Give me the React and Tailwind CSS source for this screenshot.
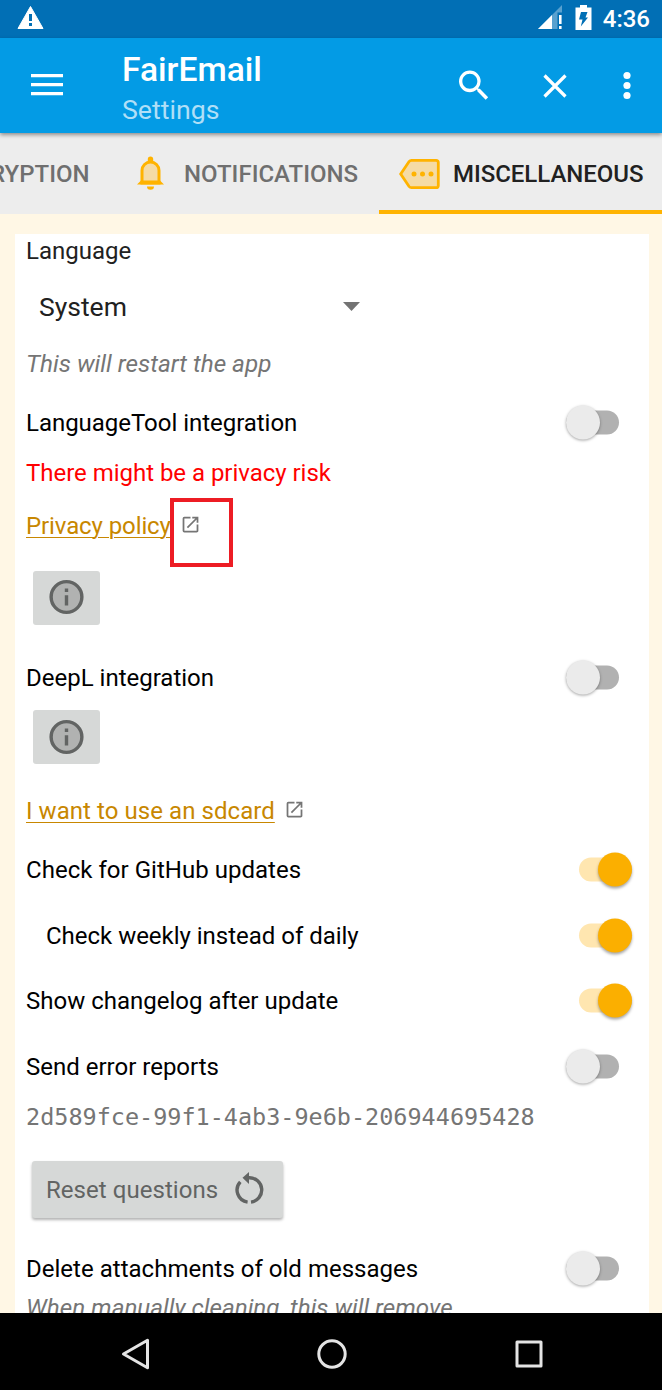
import React from "react";

function Switch({ on }) {
  return on ? (
    <span className="relative mr-[17px] block h-6 w-[53px] shrink-0 -translate-y-[0.5px] rounded-full bg-[#ffe6b0]">
      <span className="absolute -top-[5px] right-0 size-[34px] rounded-full bg-[#fbaf00] shadow-[0_2px_3px_rgba(0,0,0,0.35)]" />
    </span>
  ) : (
    <span className="relative mr-[30px] block h-6 w-[53px] shrink-0 -translate-y-[0.5px] rounded-full bg-[#b1b1b1]">
      <span className="absolute -top-[5px] -left-[0.5px] size-[34px] rounded-full bg-[#ebebeb] shadow-[0_1px_3px_rgba(0,0,0,0.35)]" />
    </span>
  );
}

function SwitchRow({ label, on = false, className = "" }) {
  return (
    <div className={`flex items-center justify-between text-black ${className}`}>
      <span>{label}</span>
      <Switch on={on} />
    </div>
  );
}

function OpenIcon() {
  return (
    <svg className="mb-[3px] ml-[9.500px] size-[21px]" viewBox="0 0 24 24" fill="#757575">
      <path d="M19 19H5V5h7V3H5a2 2 0 0 0-2 2v14a2 2 0 0 0 2 2h14c1.1 0 2-.9 2-2v-7h-2v7zM14 3v2h3.59l-9.83 9.83 1.41 1.41L19 6.41V10h2V3h-7z" />
    </svg>
  );
}

function InfoButton({ className }) {
  return (
    <button className={`ml-[17.500px] flex h-[54px] w-[67.500px] items-center justify-center rounded-[3px] bg-[#d6d8d7] ${className}`}>
      <svg className="size-[41px] -translate-y-[0.5px]" viewBox="0 0 24 24">
        <circle cx="12" cy="12" r="9" fill="#b1b2b1" stroke="#626463" strokeWidth="2" />
        <path d="M11 7h2v2h-2zM11 11h2v6h-2z" fill="#626463" />
      </svg>
    </button>
  );
}

function StatusBar() {
  return (
    <div className="flex h-[38px] shrink-0 items-center bg-[#016fb5] pr-3 pl-[17px] text-white">
      <svg className="size-[27px] -translate-y-[2px]" viewBox="0 0 27 27">
        <path d="M13.5 2.5 26 24.5H1z" fill="#fff" stroke="#fff" strokeLinejoin="round" />
        <path d="M12 10h3v7h-3zM12 19h3v3h-3z" fill="#016fb5" />
      </svg>
      <svg className="ml-auto h-6 w-6 -translate-y-[2px]" viewBox="0 0 24 24">
        <path d="M24 0v7.500h-4.500V24H0z" fill="#fff" opacity=".35" />
        <path d="M14 10v14H0z" fill="#fff" />
        <path d="M21 10h2.600v9H21zM21 21h2.600v3H21z" fill="#fff" />
      </svg>
      <svg className="ml-[13px] h-[25px] w-[17px] -translate-y-[2px]" viewBox="0 0 17 25">
        <path d="M5 0h7v2.500h4.500V25H.5V2.500H5z" fill="#fff" />
        <path d="M6 7h6.500l-2 5.500H13L5.800 21.500l1.700-7H4z" fill="#016fb5" />
      </svg>
      <span className="ml-[11px] text-[24px] leading-none font-medium">4:36</span>
    </div>
  );
}

function Toolbar() {
  return (
    <header className="relative z-10 flex h-[95px] shrink-0 items-center bg-[#039be5] pr-[31.500px] pl-[31px] text-white shadow-[0_2px_4px_rgba(0,0,0,0.4)]">
      <svg className="h-[22px] w-8 -translate-y-px" viewBox="0 0 32 22" fill="#fff">
        <path d="M0 0h32v3.200H0zM0 9h32v3.200H0zM0 18h32v3.200H0z" />
      </svg>
      <div className="ml-[59px] flex flex-col pt-2">
        <span className="text-[33.600px] leading-[40px] font-medium">FairEmail</span>
        <span className="text-[26.700px] leading-[40px] text-[#b0dff7]">Settings</span>
      </div>
      <svg className="ml-auto size-[40px] -translate-y-[0.5px]" viewBox="0 0 24 24" fill="#fff">
        <path d="M15.500 14h-.79l-.28-.27A6.471 6.471 0 0 0 16 9.500 6.500 6.500 0 1 0 9.500 16c1.610 0 3.090-.59 4.230-1.570l.27.28v.79l5 4.990L20.490 19l-4.990-5zm-6 0C7.010 14 5 11.990 5 9.500S7.010 5 9.500 5 14 7.010 14 9.500 11.990 14 9.500 14z" />
      </svg>
      <svg className="ml-[49px] size-6" viewBox="0 0 24 24" stroke="#fff" strokeWidth="3.200">
        <path d="M1.500 1.500l21 21M22.500 1.500l-21 21" />
      </svg>
      <svg className="ml-[55.500px] h-7 w-2 -translate-y-[0.5px]" viewBox="0 0 8 28" fill="#fff">
        <circle cx="4" cy="4" r="3.600" />
        <circle cx="4" cy="14" r="3.600" />
        <circle cx="4" cy="24" r="3.600" />
      </svg>
    </header>
  );
}

function Tabs() {
  return (
    <nav className="flex h-[81px] shrink-0 bg-[#ededed] text-[24px] font-medium text-[#6f6f6f]">
      <div className="flex w-[89.500px] items-center justify-end overflow-hidden pt-px">
        <span>ENCRYPTION</span>
      </div>
      <div className="flex w-[289.500px] items-center pt-px pl-[47px]">
        <svg className="h-[34px] w-[27px] -translate-y-px" viewBox="0 0 27 34">
          <path d="M5 27V14.500a8.500 8.500 0 0 1 17 0V27z" fill="#f5dba5" stroke="#ffb300" strokeWidth="3" />
          <path d="M0 28.500 4 24.500h19l4 4zM10.800 6V3.200a2.700 2.700 0 0 1 5.400 0V6zM10 30.500h7a3.500 3.200 0 0 1-7 0z" fill="#ffb300" />
        </svg>
        <span className="ml-[20.500px]">NOTIFICATIONS</span>
      </div>
      <div className="flex flex-1 items-center border-b-4 border-[#ffb300] pt-[5px] pl-5 text-[#212121]">
        <svg className="h-[31px] w-[41px] shrink-0 -translate-y-[0.5px]" viewBox="0 0 41 31">
          <path d="M12.500 1.800H37a2.300 2.300 0 0 1 2.300 2.300v22.800a2.300 2.300 0 0 1-2.300 2.300H12.500a3 3 0 0 1-2.400-1.200L1.700 15.500 10.100 3a3 3 0 0 1 2.400-1.200z" fill="#f5dba5" stroke="#ffb300" strokeWidth="2.800" />
          <g fill="#ffb300">
            <circle cx="15" cy="15.500" r="2.500" />
            <circle cx="23.500" cy="15.500" r="2.500" />
            <circle cx="32" cy="15.500" r="2.500" />
          </g>
        </svg>
        <span className="ml-[13px] tracking-[-0.04px] whitespace-nowrap">MISCELLANEOUS</span>
      </div>
    </nav>
  );
}

function NavBar() {
  return (
    <footer className="flex h-[77px] shrink-0 items-center bg-black pt-1 pl-[121px]">
      <svg className="h-8 w-[30px]" viewBox="0 0 30 32" fill="none" stroke="#e4e4e4" strokeWidth="3" strokeLinejoin="round">
        <path d="M2.500 16 26.500 2.200v27.600z" />
      </svg>
      <svg className="ml-[166px] size-[30px]" viewBox="0 0 30 30" fill="none" stroke="#e4e4e4" strokeWidth="3">
        <circle cx="15" cy="15" r="13.200" />
      </svg>
      <svg className="ml-[167.500px] size-7" viewBox="0 0 28 28" fill="none" stroke="#e4e4e4" strokeWidth="3" strokeLinejoin="round">
        <path d="M2 2h24v24H2z" />
      </svg>
    </footer>
  );
}

export default function App() {
  return (
    <div className="flex h-[1390px] w-[662px] flex-col overflow-hidden bg-[#fff7e5] font-['Roboto',sans-serif] text-[24px] leading-[28px]">
      <StatusBar />
      <Toolbar />
      <Tabs />
      <main className="mt-[20px] mr-[13px] ml-[15px] flex min-h-0 flex-1 flex-col overflow-hidden bg-white">
        <div className="flex h-[34px] shrink-0 items-center pl-[11px] text-[#212121]">Language</div>
        <div className="flex h-[78px] w-[344.500px] shrink-0 items-center justify-between pl-6 text-[26.500px] text-[#212121]">
          <span>System</span>
          <svg className="h-[9px] w-[17px] -translate-y-px" viewBox="0 0 17 9" fill="#737373">
            <path d="M0 0h17L8.500 9z" />
          </svg>
        </div>
        <div className="flex h-9 shrink-0 items-center pl-[11px] text-[24.300px] text-[#757575] italic">This will restart the app</div>
        <SwitchRow label="LanguageTool integration" className="mt-2 h-[66px] shrink-0 pl-[11px] tracking-[-0.03px]" />
        <div className="flex h-[34px] shrink-0 items-center pl-[11px] tracking-[-0.03px] text-[#ff0000]">There might be a privacy risk</div>
        <div className="relative flex h-[71px] shrink-0 items-center pl-[11px]">
          <a className="tracking-[-0.1px] text-[#c88700] underline decoration-1 underline-offset-[3px]">Privacy policy</a>
          <OpenIcon />
          <span className="absolute top-2 left-[155px] h-[69px] w-[63px] border-4 border-[#ed1c24]" />
        </div>
        <InfoButton className="mt-[9.500px] shrink-0" />
        <SwitchRow label="DeepL integration" className="mt-[21.500px] h-16 shrink-0 pl-[11px]" />
        <InfoButton className="shrink-0" />
        <div className="mt-[21px] flex h-[52px] shrink-0 items-center pl-[11px]">
          <a className="tracking-[0.06px] text-[#c88700] underline decoration-1 underline-offset-[3px]">I want to use an sdcard</a>
          <OpenIcon />
        </div>
        <SwitchRow label="Check for GitHub updates" on className="h-[65.6px] shrink-0 pl-[11px] tracking-[0.03px]" />
        <SwitchRow label="Check weekly instead of daily" on className="h-[65.6px] shrink-0 pt-px pl-[31px] tracking-[-0.02px]" />
        <SwitchRow label="Show changelog after update" on className="h-[65.6px] shrink-0 pl-[11px]" />
        <SwitchRow label="Send error reports" className="h-[65.6px] shrink-0 pl-[11px]" />
        <div className="flex h-[34px] shrink-0 items-center pt-px pl-[11px] font-['DejaVu_Sans_Mono',monospace] text-[23.470px] text-[#757575]">
          2d589fce-99f1-4ab3-9e6b-206944695428
        </div>
        <button className="mt-[28px] ml-[17px] flex h-[57px] w-[251px] shrink-0 items-center rounded-[3px] bg-[#d6d8d7] pl-[14px] text-[#626463] shadow-[0_2px_3px_rgba(0,0,0,0.3)]">
          <span className="tracking-[0.05px]">Reset questions</span>
          <svg className="ml-[11px] size-[40px]" viewBox="0 0 40 40" fill="none" stroke="#626463" strokeWidth="3.400">
            <path d="M20 7.800a12.200 12.200 0 0 1 2 24.300M18.600 32.100A12.200 12.200 0 0 1 11.300 11.800" />
            <path d="M13.500 7.800 20 2v12z" fill="#626463" stroke="none" />
          </svg>
        </button>
        <SwitchRow label="Delete attachments of old messages" className="mt-[25px] h-[52px] shrink-0 pl-[11px] tracking-[0.02px]" />
        <div className="-mt-px shrink-0 pl-[11px] text-[24.200px] text-[#757575] italic">When manually cleaning, this will remove</div>
      </main>
      <NavBar />
    </div>
  );
}
